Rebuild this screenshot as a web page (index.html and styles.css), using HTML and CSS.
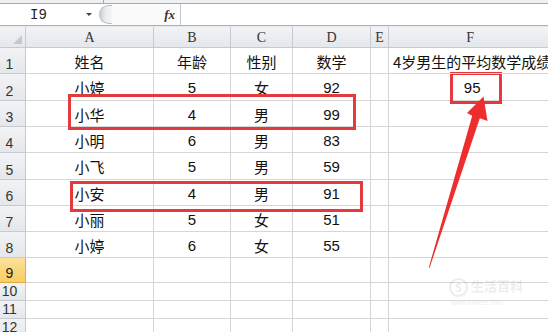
FILE: index.html
```html
<!DOCTYPE html>
<html lang="zh-CN">
<head>
<meta charset="utf-8">
<title>Sheet</title>
<link rel="stylesheet" href="styles.css">
</head>
<body>
<div class="app">
  <div class="ribbon-edge"><span class="split"></span></div>
  <div class="fbar">
    <div class="namebox"><span class="ref">I9</span><span class="dd"></span></div>
    <div class="knob"></div>
    <div class="fxarea"><span class="fx">fx</span></div>
    <div class="formula"></div>
  </div>
  <div class="gap"></div>
  <div class="sheet">
    <div class="corner"><span class="tri"></span></div>
    <div class="ch">A</div><div class="ch">B</div><div class="ch">C</div><div class="ch">D</div><div class="ch">E</div><div class="ch">F</div>

    <div class="rh">1</div><div class="c">姓名</div><div class="c">年龄</div><div class="c">性别</div><div class="c">数学</div><div class="c"></div><div class="c left">4岁男生的平均数学成绩</div>
    <div class="rh">2</div><div class="c">小婷</div><div class="c num">5</div><div class="c">女</div><div class="c num">92</div><div class="c"></div><div class="c num fc">95</div>
    <div class="rh">3</div><div class="c">小华</div><div class="c num">4</div><div class="c">男</div><div class="c num">99</div><div class="c"></div><div class="c"></div>
    <div class="rh">4</div><div class="c">小明</div><div class="c num">6</div><div class="c">男</div><div class="c num">83</div><div class="c"></div><div class="c"></div>
    <div class="rh">5</div><div class="c">小飞</div><div class="c num">5</div><div class="c">男</div><div class="c num">59</div><div class="c"></div><div class="c"></div>
    <div class="rh">6</div><div class="c">小安</div><div class="c num">4</div><div class="c">男</div><div class="c num">91</div><div class="c"></div><div class="c"></div>
    <div class="rh">7</div><div class="c">小丽</div><div class="c num">5</div><div class="c">女</div><div class="c num">51</div><div class="c"></div><div class="c"></div>
    <div class="rh">8</div><div class="c">小婷</div><div class="c num">6</div><div class="c">女</div><div class="c num">55</div><div class="c"></div><div class="c"></div>
    <div class="rh sel">9</div><div class="c"></div><div class="c"></div><div class="c"></div><div class="c"></div><div class="c"></div><div class="c"></div>
    <div class="rh">10</div><div class="c"></div><div class="c"></div><div class="c"></div><div class="c"></div><div class="c"></div><div class="c"></div>
    <div class="rh">11</div><div class="c"></div><div class="c"></div><div class="c"></div><div class="c"></div><div class="c"></div><div class="c"></div>
    <div class="rh">12</div><div class="c"></div><div class="c"></div><div class="c"></div><div class="c"></div><div class="c"></div><div class="c"></div>
  </div>

  <div class="mark box1"></div>
  <div class="mark box2"></div>
  <div class="mark box3"></div>
  <svg class="arrow" width="548" height="332" viewBox="0 0 548 332">
    <polygon points="483.5,96.5 487.5,121 479.8,118.2 429.6,267.8 428.8,267.4 472.2,115.8 467,113" fill="#ee2e2e"/>
  </svg>
  <div class="watermark"><span class="wm-logo">S</span><span class="wm-text">生活百科</span><span class="wm-sub">www.bimeiz.com</span></div>
</div>
</body>
</html>
```

FILE: styles.css
```css
html, body {
  margin: 0;
  padding: 0;
  background: #ffffff;
}
body {
  width: 548px;
  height: 332px;
  overflow: hidden;
}
.app {
  position: relative;
  width: 548px;
  height: 332px;
  overflow: hidden;
  display: flex;
  flex-direction: column;
}
.ribbon-edge {
  height: 3px;
  background: #eef0f3;
  border-bottom: 1px solid #a3aab3;
  position: relative;
  flex: none;
}
.split {
  position: absolute;
  left: 103px;
  top: 0;
  width: 1px;
  height: 3px;
  background: #a3aab3;
}
.fbar {
  height: 21px;
  border-bottom: 1px solid #a9b0b9;
  display: flex;
  flex: none;
  background: #ffffff;
}
.namebox {
  width: 99px;
  display: flex;
  align-items: center;
  position: relative;
}
.ref {
  margin-left: 30px;
  font-family: "Liberation Mono", monospace;
  font-size: 14px;
  color: #222;
}
.dd {
  position: absolute;
  left: 86px;
  top: 9px;
  width: 0;
  height: 0;
  border-left: 3px solid transparent;
  border-right: 3px solid transparent;
  border-top: 3px solid #444;
}
.knob {
  width: 13px;
  margin: 1px 0;
  border-radius: 10px 0 0 10px;
  background: linear-gradient(90deg, #c9ced5 0%, #e9ecef 45%, #f4f5f7 100%);
  border: 1px solid #b9bfc7;
  border-right: none;
  box-sizing: border-box;
}
.fxarea {
  width: 63px;
  border-right: 1px solid #c3c8cf;
  display: flex;
  align-items: center;
  justify-content: flex-end;
  padding-right: 5px;
  background: #fbfbfc;
}
.fx {
  font-family: "Liberation Serif", serif;
  font-style: italic;
  font-weight: bold;
  font-size: 13px;
  color: #333;
}
.formula {
  flex: 1;
}
.gap {
  height: 1px;
  background: #e6e9ed;
  flex: none;
}
.sheet {
  display: grid;
  grid-template-columns: 26px 128px 77px 62px 78px 18px 1fr;
  grid-template-rows: 21px 26px 27px 26px 26px 27px 26px 26px 26px 25px 18px 18px 18px;
  flex: none;
  width: 548px;
}
.sheet > div {
  box-sizing: border-box;
  border-right: 1px solid #d6d6d6;
  border-bottom: 1px solid #d6d6d6;
  display: flex;
  align-items: center;
  justify-content: center;
  overflow: visible;
  white-space: nowrap;
}
.sheet > .corner,
.sheet > .ch,
.sheet > .rh {
  background: linear-gradient(#f2f3f5, #e4e7eb);
  border-right-color: #c5cad1;
  border-bottom-color: #c5cad1;
}
.corner {
  position: relative;
}
.tri {
  position: absolute;
  right: 3px;
  bottom: 3px;
  width: 0;
  height: 0;
  border-left: 9px solid transparent;
  border-bottom: 9px solid #c4c9cf;
}
.ch {
  font-family: "Liberation Serif", serif;
  font-size: 14px;
  color: #333;
  padding-top: 1px;
}
.rh {
  font-family: "Liberation Sans", sans-serif;
  font-size: 14px;
  color: #333;
  padding-right: 6px;
  align-items: flex-end !important;
  padding-bottom: 1px;
}
.sheet > .rh.sel {
  background: linear-gradient(#fbe19a, #f8cd63);
  border-bottom-color: #e2a84a;
  border-right-color: #e2a84a;
  color: #222;
}
.c {
  font-family: "Noto Sans CJK SC", "Liberation Sans", sans-serif;
  font-size: 15px;
  color: #111;
  padding-top: 1px;
}
.c.num {
  font-family: "Liberation Sans", "Noto Sans CJK SC", sans-serif;
}
.c.left {
  justify-content: flex-start;
  padding-left: 4px;
  position: relative;
  z-index: 1;
}
.c.fc {
  padding-left: 4px;
}
.mark {
  position: absolute;
  border: 3px solid #e23a3d;
  box-sizing: border-box;
}
.box1 {
  left: 68px;
  top: 94px;
  width: 288px;
  height: 36px;
}
.box2 {
  left: 70px;
  top: 181px;
  width: 293px;
  height: 31px;
}
.box3 {
  left: 450px;
  top: 72px;
  width: 52px;
  height: 32px;
}
.arrow {
  position: absolute;
  left: 0;
  top: 0;
}
.watermark {
  position: absolute;
  left: 449px;
  top: 278px;
  width: 80px;
  height: 30px;
  opacity: 0.1;
  color: #555;
  font-family: "Noto Sans CJK SC", sans-serif;
}
.wm-logo {
  position: absolute;
  left: 0;
  top: 0;
  width: 15px;
  height: 15px;
  border-radius: 50%;
  border: 2px solid #555;
  font-size: 11px;
  line-height: 15px;
  text-align: center;
  font-weight: bold;
}
.wm-text {
  position: absolute;
  left: 22px;
  top: 0;
  font-size: 13px;
  line-height: 16px;
  font-weight: bold;
}
.wm-sub {
  position: absolute;
  left: 2px;
  top: 21px;
  font-size: 7px;
  line-height: 8px;
  font-family: "Liberation Sans", sans-serif;
}
```
